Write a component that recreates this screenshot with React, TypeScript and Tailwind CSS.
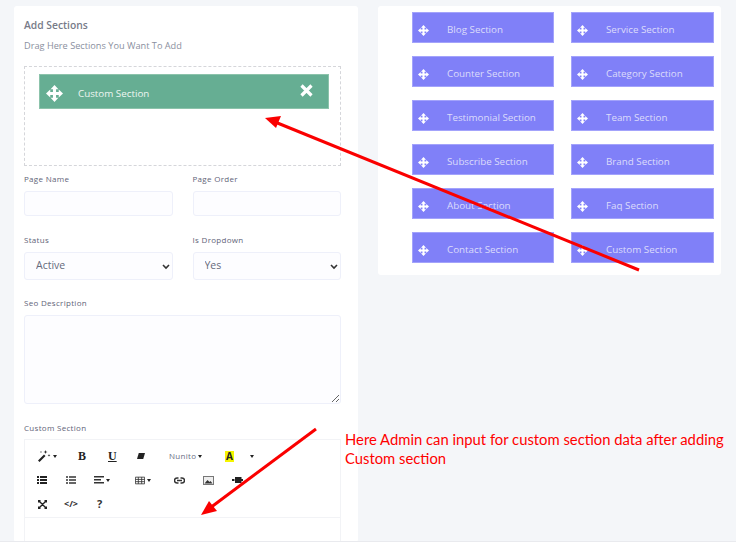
const sections = [
  "Blog Section",
  "Service Section",
  "Counter Section",
  "Category Section",
  "Testimonial Section",
  "Team Section",
  "Subscribe Section",
  "Brand Section",
  "About Section",
  "Faq Section",
  "Contact Section",
  "Custom Section",
];

function MoveIcon({ size = 13 }: { size?: number }) {
  return (
    <svg width={size} height={size} viewBox="0 0 24 24" fill="white">
      <path d="M12 0L17.500 6H14.200V9.800H18V6.500L24 12L18 17.500V14.200H14.200V18H17.500L12 24L6.500 18H9.800V14.200H6V17.500L0 12L6 6.500V9.800H9.800V6H6.500Z" />
    </svg>
  );
}

function Label({ children }: { children: string }) {
  return <div className="text-[8px] leading-[12px] tracking-[0.3px] text-[#5f6478]">{children}</div>;
}

function Caret() {
  return <span className="ml-[2px] inline-block border-x-[2.500px] border-t-[3px] border-x-transparent border-t-[#222]" />;
}

function Select({ value }: { value: string }) {
  return (
    <div className="relative">
      <select
        defaultValue={value}
        className="block h-[28px] w-full appearance-none rounded-[3px] border border-[#eef0fa] bg-[#fdfdff] pb-[1px] pl-[11px] text-[10.500px] text-[#666b7c]"
      >
        <option>{value}</option>
      </select>
      <svg width="8" height="6" viewBox="0 0 8 6" className="absolute right-[3px] top-[12px]" fill="none" stroke="#333" strokeWidth="1.600">
        <path d="M1 1l3 3 3-3" />
      </svg>
    </div>
  );
}

function Toolbar() {
  return (
    <div className="border-b border-[#f2f3f6] pb-[1px] pt-[4px] text-[#222]">
      <div className="flex h-[24px] items-center">
        <span className="ml-[13px] flex w-[40px] items-center">
          <svg width="13" height="12" viewBox="0 0 13 12" fill="#222">
            <path d="M0 10.500L6 4.500l1.500 1.500-6 6zM7.500 0l.5 1.500 1.500.5-1.500.5-.5 1.500-.5-1.500L5.500 2 7 1.500zM11 4l.4 1 1 .4-1 .4-.4 1-.4-1-1-.4 1-.4zM3 1l.3.7.7.3-.7.3-.3.7-.3-.7L2 2l.7-.3z" />
          </svg>
          <Caret />
        </span>
        <span className="w-[30px] text-[12px] font-bold" style={{ fontFamily: "'Liberation Serif', serif" }}>B</span>
        <span className="w-[29px] text-[12px] font-bold underline" style={{ fontFamily: "'Liberation Serif', serif" }}>U</span>
        <svg width="8" height="8" viewBox="0 0 9 9" fill="#222">
          <path d="M2 1h7L7 8H0z" />
        </svg>
        <span className="ml-[24px] flex w-[56px] items-center text-[8px] tracking-[0.3px] text-[#6a6f85]">
          Nunito
          <Caret />
        </span>
        <span className="flex h-[11px] w-[9px] items-center justify-center bg-[#f5f500] text-[10px] font-bold text-[#222]">A</span>
        <span className="ml-[14px] flex items-center"><Caret /></span>
      </div>
      <div className="flex h-[24px] items-center">
        <svg width="10" height="8" viewBox="0 0 10 8" className="ml-[12px]" fill="#222">
          <path d="M0 0h2v2H0zM3 0h7v2H3zM0 3h2v2H0zM3 3h7v2H3zM0 6h2v2H0zM3 6h7v2H3z" />
        </svg>
        <svg width="10" height="8" viewBox="0 0 10 8" className="ml-[19px]" fill="#666">
          <path d="M0 0h2v2H0zM3 0h7v2H3zM0 3h2v2H0zM3 3h7v2H3zM0 6h2v2H0zM3 6h7v2H3z" />
        </svg>
        <span className="ml-[18px] flex w-[41px] items-center">
          <svg width="10" height="8" viewBox="0 0 10 8" fill="#333">
            <path d="M0 0h10v1.500H0zM0 3h7v1.500H0zM0 6h10v1.500H0z" />
          </svg>
          <Caret />
        </span>
        <span className="flex w-[39px] items-center">
          <svg width="10" height="9" viewBox="0 0 12 9" fill="none" stroke="#333">
            <path d="M.5.500h11v8H.5zM.5 3.200h11M.5 5.900h11M4 .5v8M8 .5v8" />
          </svg>
          <Caret />
        </span>
        <svg width="11" height="7" viewBox="0 0 11 7" fill="none" stroke="#333" strokeWidth="1.500">
          <path d="M4.500 1H3a2.500 2.500 0 0 0 0 5h1.500M6.500 1H8a2.500 2.500 0 0 1 0 5H6.500M3 3.500h5" />
        </svg>
        <svg width="11" height="9" viewBox="0 0 11 9" className="ml-[18px]">
          <rect x=".5" y=".5" width="10" height="8" fill="#eee" stroke="#777" />
          <path d="M1.500 7.500l3-3.500 2 2 1-1 2 2.500z" fill="#333" />
        </svg>
        <svg width="11" height="7" viewBox="0 0 11 7" className="ml-[18px]" fill="#222">
          <path d="M3 0h6.500v6H3zM0 2h2.500v2H0zM9.500 2H11v2H9.500z" />
        </svg>
      </div>
      <div className="flex h-[24px] items-center">
        <svg width="9" height="9" viewBox="0 0 9 9" className="ml-[13px]" fill="none" stroke="#222" strokeWidth="1.400">
          <path d="M1 1l7 7M8 1L1 8M.5 2.500V.5h2M6.500.5h2v2M.5 6.500v2h2M8.500 6.500v2h-2" />
        </svg>
        <span className="ml-[17px] text-[9px] font-bold text-[#333]">&lt;/&gt;</span>
        <span className="ml-[19px] text-[11px] font-bold text-[#333]">?</span>
      </div>
    </div>
  );
}

export default function App() {
  return (
    <div className="relative h-[542px] w-[736px] overflow-hidden border-b border-[#e9eaee] bg-[#f4f6f9]" style={{ fontFamily: "'Open Sans', sans-serif" }}>
      <div className="flex items-start gap-[20px] pl-[14px] pt-[6px]">
        {/* Add sections form */}
        <div className="h-[536px] w-[344px] shrink-0 rounded-[3px] bg-white pl-[10px] pr-[17px] pt-[12px]">
          <div className="text-[10.300px] font-semibold leading-[14px] text-[#777b88]">Add Sections</div>
          <div className="mt-[7px] text-[9.200px] leading-[14px] text-[#8a8f9e]">Drag Here Sections You Want To Add</div>
          <div className="mt-[13px] h-[100px] border border-dashed border-[#d5d6da] pl-[14px] pr-[11px] pt-[7px]">
            <div className="flex h-[35px] items-center border border-[#8cc3ab] bg-[#66ae93] pl-[6px] pr-[15px] pt-[4px] text-white">
              <MoveIcon size={17} />
              <span className="ml-[15px] pt-[2px] text-[9.800px] text-[#eef6f2]">Custom Section</span>
              <svg width="13" height="13" viewBox="0 0 13 13" className="ml-auto mb-[6px]" fill="none" stroke="white" strokeWidth="3.200">
                <path d="M1.500 1.500l10 10M11.500 1.500l-10 10" />
              </svg>
            </div>
          </div>

          <div className="mt-[7px] grid grid-cols-2 gap-x-[20px]">
            <div>
              <Label>Page Name</Label>
              <input className="mt-[6px] block h-[25px] w-full rounded-[3px] border border-[#eef0fa] bg-[#fdfdff]" />
            </div>
            <div>
              <Label>Page Order</Label>
              <input className="mt-[6px] block h-[25px] w-full rounded-[3px] border border-[#eef0fa] bg-[#fdfdff]" />
            </div>
            <div className="mt-[18px]">
              <Label>Status</Label>
              <div className="mt-[6px]"><Select value="Active" /></div>
            </div>
            <div className="mt-[18px]">
              <Label>Is Dropdown</Label>
              <div className="mt-[6px]"><Select value="Yes" /></div>
            </div>
          </div>

          <div className="mt-[17px]"><Label>Seo Description</Label></div>
          <textarea className="mt-[6px] block h-[89px] w-full rounded-[3px] border border-[#eef0fa] bg-[#fdfdff]" />

          <div className="mt-[18px]"><Label>Custom Section</Label></div>
          <div className="mt-[5px] h-[120px] border border-[#f2f3f6]">
            <Toolbar />
          </div>
        </div>

        {/* Available sections */}
        <div className="grid w-[343px] shrink-0 grid-cols-[142px_143px] gap-x-[17px] gap-y-[13px] rounded-[3px] bg-white pb-[12px] pl-[34px] pt-[6px]">
          {sections.map((name) => (
            <div key={name} className="flex h-[31px] items-center border border-[#a3a3fb] bg-[#8080f8] pl-[5px] pt-[5px]">
              <MoveIcon size={11} />
              <span className="ml-[18px] text-[9.800px] text-[#dcdcfb]">{name}</span>
            </div>
          ))}
        </div>
      </div>

      {/* Annotation overlay */}
      <svg className="absolute left-0 top-0" width="736" height="542" viewBox="0 0 736 542">
        <path d="M639 270L275 122" stroke="#fa0000" strokeWidth="3" />
        <path d="M265 118l16-2-5 12z" fill="#fa0000" />
        <path d="M316 429L210 508" stroke="#fa0000" strokeWidth="3" />
        <path d="M201 515l8-14 8 10z" fill="#fa0000" />
      </svg>
      <div className="absolute left-[345px] top-[430px] text-[14.800px] leading-[19px] text-[#ff0000]" style={{ fontFamily: "Lato, sans-serif" }}>
        Here Admin can input for custom section data after adding
        <br />
        Custom section
      </div>
    </div>
  );
}
